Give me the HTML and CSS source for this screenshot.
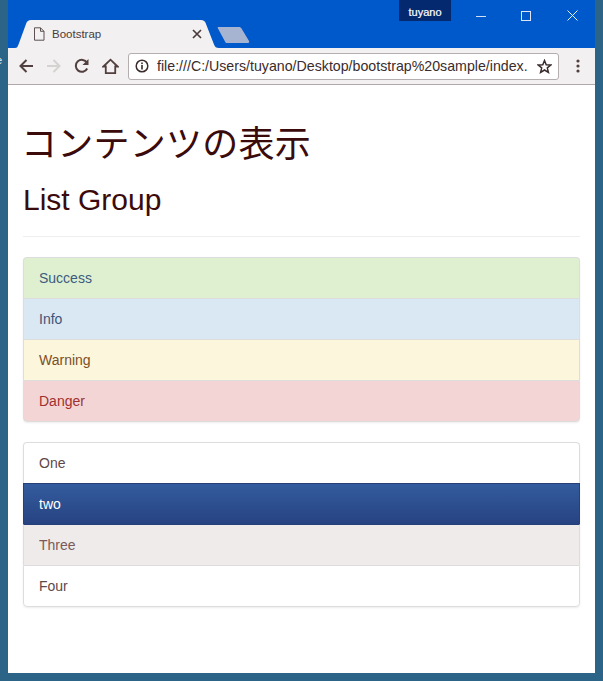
FILE: index.html
```html
<!DOCTYPE html>
<html lang="ja">
<head>
<meta charset="utf-8">
<title>Bootstrap</title>
<link rel="stylesheet" href="styles.css">
</head>
<body>
<span class="desktop-label">e</span>
<div class="window">
  <header class="titlebar">
    <div class="tab">
      <svg class="tab-shape" width="210" height="28" viewBox="0 0 210 28"><path d="M6 28 C8 28 8.500 27 9.500 24.500 L17 4 C18 1 19.500 0 22 0 L192 0 C194.500 0 196 1 197 4 L205 24.500 C206 27 207 28 210 28 Z" fill="#f2f0f0"/></svg>
      <svg class="tab-doc" width="12" height="14" viewBox="0 0 12 14"><path d="M1.500 .8 H7.500 L11 4.300 V13.200 H1.500 Z M7.500 .8 V4.300 H11" fill="none" stroke="#5c5050" stroke-width="1"/></svg>
      <span class="tab-title">Bootstrap</span>
      <svg class="tab-close" width="10" height="10" viewBox="0 0 10 10"><path d="M1 1 L9 9 M9 1 L1 9" stroke="#4a3c3c" stroke-width="1.700"/></svg>
    </div>
    <svg class="newtab" width="34" height="16" viewBox="0 0 34 16"><path d="M1.500 0 H22 C23 0 24 .5 24.500 1.500 L32 14 C32.500 15 32 16 31 16 H10 C9 16 8.500 15.500 8 14.500 L1 1.500 C.5 .5 .5 0 1.500 0 Z" fill="#a6b4d2"/></svg>
    <div class="user">tuyano</div>
    <div class="winctl">
      <svg width="10" height="10" viewBox="0 0 10 10"><path d="M0 5.500 H10" stroke="#cfe0f8" stroke-width="1"/></svg>
      <svg width="10" height="10" viewBox="0 0 10 10"><rect x=".5" y=".5" width="9" height="9" fill="none" stroke="#dbe7f8" stroke-width="1"/></svg>
      <svg width="11" height="11" viewBox="0 0 11 11"><path d="M.5 .5 L10.500 10.500 M10.500 .5 L.5 10.500" stroke="#e6eefa" stroke-width="1"/></svg>
    </div>
  </header>
  <nav class="toolbar">
    <svg class="ico" width="16" height="16" viewBox="0 0 16 16"><path d="M15 8 H2.500 M8.500 2 L2.500 8 L8.500 14" fill="none" stroke="#523f3f" stroke-width="2"/></svg>
    <svg class="ico" width="16" height="16" viewBox="0 0 16 16"><path d="M1 8 H13.500 M7.500 2 L13.500 8 L7.500 14" fill="none" stroke="#d6d2d2" stroke-width="2"/></svg>
    <svg class="ico" width="16" height="16" viewBox="0 0 16 16"><path d="M13.200 10.500 A6 6 0 1 1 13 4.800" fill="none" stroke="#523f3f" stroke-width="2"/><path d="M14.500 1 V7 H8.500 Z" fill="#523f3f"/></svg>
    <svg class="ico home" width="17" height="17" viewBox="0 0 18 18"><path d="M1.500 9 L9 1.800 L16.500 9 H14 V16 H4 V9 Z" fill="none" stroke="#523f3f" stroke-width="1.900"/></svg>
    <div class="omnibox">
      <svg class="info" width="14" height="14" viewBox="0 0 14 14"><circle cx="7" cy="7" r="5.800" fill="none" stroke="#3a2c2c" stroke-width="1.500"/><rect x="6.200" y="6" width="1.600" height="4.500" fill="#3a2c2c"/><rect x="6.200" y="3.500" width="1.600" height="1.600" fill="#3a2c2c"/></svg>
      <span class="url">file:///C:/Users/tuyano/Desktop/bootstrap%20sample/index.</span>
      <svg class="star" width="15" height="15" viewBox="0 0 15 15"><path d="M7.500 1.500 L9.200 5.700 L13.800 6 L10.300 8.900 L11.400 13.400 L7.500 11 L3.600 13.400 L4.700 8.900 L1.200 6 L5.800 5.700 Z" fill="none" stroke="#3a2c2c" stroke-width="1.500"/></svg>
    </div>
    <svg class="menu" width="4" height="14" viewBox="0 0 4 14"><circle cx="2" cy="2" r="1.600" fill="#523f3f"/><circle cx="2" cy="7" r="1.600" fill="#523f3f"/><circle cx="2" cy="12" r="1.600" fill="#523f3f"/></svg>
  </nav>
  <main class="page">
    <h1 class="heading">コンテンツの表示</h1>
    <h2 class="subheading">List Group</h2>
    <hr class="rule">
    <ul class="list-group">
      <li class="item success">Success</li>
      <li class="item info-row">Info</li>
      <li class="item warning">Warning</li>
      <li class="item danger">Danger</li>
    </ul>
    <ul class="list-group">
      <li class="item">One</li>
      <li class="item active">two</li>
      <li class="item muted">Three</li>
      <li class="item">Four</li>
    </ul>
  </main>
</div>
</body>
</html>
```

FILE: styles.css
```css
* { box-sizing: border-box; }
html, body { margin: 0; height: 100%; }
body {
  position: relative;
  width: 603px;
  height: 681px;
  overflow: hidden;
  background: #2c6488;
  padding: 0 8px 8px;
  font-family: "Liberation Sans", Arial, sans-serif;
}
.desktop-label { position: absolute; left: -4px; top: 53px; font-size: 11px; line-height: 14px; color: #e8eef2; }
.window { position: relative; width: 587px; height: 673px; background: #fff; display: flex; flex-direction: column; }

.titlebar { height: 48px; background: #0059cb; display: flex; align-items: flex-end; position: relative; flex: none; }
.tab { position: relative; width: 210px; height: 28px; margin-left: 1px; display: flex; align-items: center; padding: 0 0 0 24px; flex: none; }
.tab-shape { position: absolute; left: 0; top: 0; }
.tab-doc { position: relative; flex: none; }
.tab-title { position: relative; font-size: 11.500px; color: #4a3c3c; margin-left: 7px; width: 140px; }
.tab-close { position: relative; flex: none; }
.newtab { flex: none; margin: 0 0 5px -2px; }
.user { position: absolute; left: 391px; top: 0; width: 52px; height: 21px; background: #04296f; color: #fff; font-size: 11px; line-height: 24px; text-align: center; -webkit-text-stroke: .2px #fff; }
.winctl { position: absolute; right: 17px; top: 10px; display: flex; gap: 35px; align-items: center; }
.winctl svg:last-child { margin-left: 1px; }

.toolbar { height: 37px; background: #f2f0f0; border-bottom: 1px solid #b0a8a8; display: flex; align-items: center; padding: 0 14px 0 10px; flex: none; }
.ico { flex: none; margin-right: 12px; }
.home { margin-right: 9px; }
.omnibox { width: 431px; height: 27px; border: 1px solid #b5aeae; border-radius: 3px; background: #fff; display: flex; align-items: center; padding: 0 6px; flex: none; }
.info { flex: none; margin-right: 8px; }
.url { font-size: 14.200px; color: #3a2c2c; white-space: nowrap; overflow: hidden; width: 372px; flex: none; }
.star { flex: none; margin-left: 8px; }
.menu { flex: none; margin-left: 17px; }

.page { padding: 0 15px; flex: 1; }
.heading { margin: 40px 0 0 -2px; font-size: 36px; line-height: 40px; font-weight: 400; letter-spacing: .25px; color: #3b0a0a; font-family: "Liberation Sans", "Noto Sans CJK JP", sans-serif; }
.subheading { margin: 18px 0 0; font-size: 30px; line-height: 33px; font-weight: 400; color: #3b0a0a; }
.rule { margin: 20px 0 20px; border: 0; border-top: 1px solid #eee; }
.list-group { list-style: none; margin: 0 0 20px; padding: 0; border-radius: 4px; box-shadow: 0 1px 2px rgba(0,0,0,.075); }
.item { height: 41px; padding: 10px 15px; font-size: 14px; line-height: 20px; color: #5f4848; background: #fff; border: 1px solid #ddd; border-bottom-width: 0; }
.item:first-child { border-radius: 4px 4px 0 0; }
.item:last-child { height: 42px; border-bottom-width: 1px; border-radius: 0 0 4px 4px; }
.success { background: #dff0d0; color: #3c5a80; }
.info-row { background: #d9e8f2; color: #3f5478; }
.warning { background: #fcf6dc; color: #7a4f28; }
.danger { background: #f3d5d5; color: #a03030; }
.active { background: linear-gradient(#335c9e, #274281); border-color: #26407a; color: #fff; }
.active + .item { border-top-color: #26407a; }
.muted { background: #eeebea; color: #7a5a5a; }
```
